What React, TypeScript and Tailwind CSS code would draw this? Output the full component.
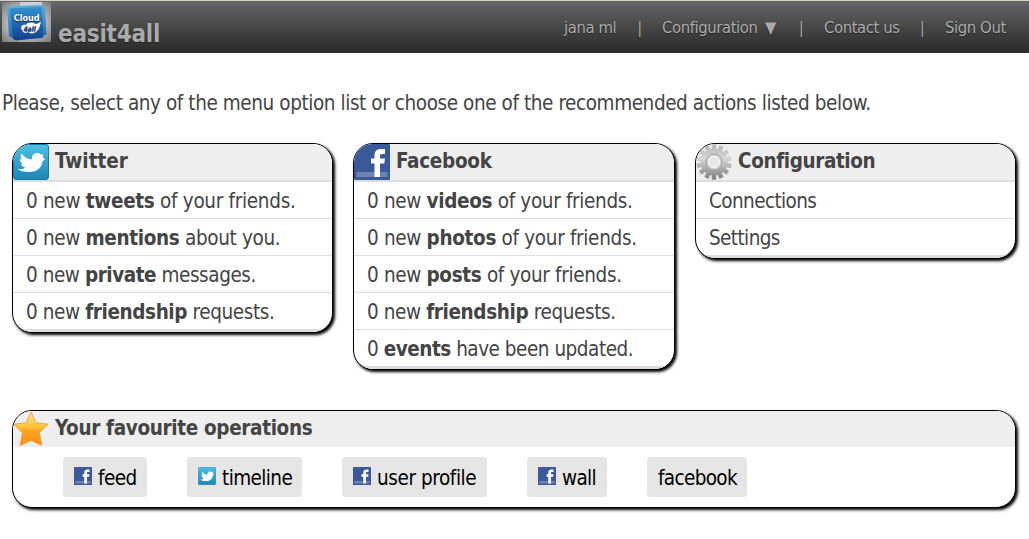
import React from "react";

function TwitterIcon({ className }: { className: string }) {
  return (
    <svg viewBox="0 0 36 36" className={className}>
      <defs>
        <linearGradient id="tw" x1="0" y1="0" x2="0" y2="1">
          <stop offset="0" stopColor="#4cc0e4" />
          <stop offset="1" stopColor="#1b86b4" />
        </linearGradient>
      </defs>
      <rect x="0.5" y="0.5" width="35" height="35" rx="2.5" fill="url(#tw)" stroke="#1679a6" />
      <path
        fill="#fff"
        d="M4.500 24.800C7.500 25.500 10.500 24.800 12.300 23.400C10 23 8.500 21.800 8 20H10C8 18.800 6.800 17.300 6.800 15L9.200 15.600C7.500 13.800 7.200 11.600 8.400 9.500C11.300 13 14.500 15 18.900 15.500C18.500 11.500 20.700 9 24 9C26 9 27 9.500 28.200 10.700L30.600 9.900L29.600 12.300L32 16L29.600 16.800C29 23.500 24.500 28 16 28C11 28 7.500 27 4.500 24.800Z"
      />
    </svg>
  );
}

function FacebookIcon({ className }: { className: string }) {
  return (
    <svg viewBox="0 0 36 36" className={className}>
      <rect width="36" height="36" rx="1" fill="#3b5998" />
      <rect x="2.500" y="28" width="31" height="5" fill="#6d84b4" />
      <path
        fill="#fff"
        d="M20.500 33V19.500H17V14.500H20.500V11.500C20.500 7 23 5 27 5H31V10H28.500C26.500 10 26 10.800 26 12.500V14.500H31L30.300 19.500H26V33Z"
      />
    </svg>
  );
}

function GearIcon() {
  const teeth = Array.from({ length: 14 }, (_, i) => (i * 360) / 14 + 13);
  return (
    <svg viewBox="0 0 36 36" className="size-9 shrink-0">
      <defs>
        <linearGradient id="gear" gradientUnits="userSpaceOnUse" x1="18" y1="0" x2="18" y2="36">
          <stop offset="0" stopColor="#b4b4b4" />
          <stop offset="0.4" stopColor="#d6d6d6" />
          <stop offset="0.6" stopColor="#b8b8b8" />
          <stop offset="1" stopColor="#7d7d7d" />
        </linearGradient>
        <mask id="teeth">
          <circle cx="18" cy="18" r="18" fill="#fff" />
          {teeth.map((a) => (
            <path key={a} d="M16 -1L17.200 4.500H18.800L20 -1Z" fill="#000" transform={`rotate(${a} 18 18)`} />
          ))}
        </mask>
      </defs>
      <circle cx="18" cy="18" r="17.800" fill="url(#gear)" mask="url(#teeth)" />
      <circle cx="18" cy="18" r="8" fill="#d0d0d0" stroke="#a2a2a2" strokeWidth="1" />
      <circle cx="18" cy="18" r="5.400" fill="#e6e6e6" stroke="#fafafa" strokeWidth="1.200" />
    </svg>
  );
}

function StarIcon() {
  return (
    <svg viewBox="0 0 36 36" className="size-9 shrink-0">
      <defs>
        <linearGradient id="star" x1="0" y1="0" x2="0" y2="1">
          <stop offset="0" stopColor="#ffe58a" />
          <stop offset="0.45" stopColor="#ffc23c" />
          <stop offset="0.55" stopColor="#ffa51f" />
          <stop offset="1" stopColor="#fb8a12" />
        </linearGradient>
      </defs>
      <path
        d="M18 1L22.800 11.800L35.300 13.200L26.300 21.500L28.900 34.300L18 29.500L7 34.500L9.500 22L0.700 13.200L13.200 11.800Z"
        fill="url(#star)"
        stroke="#e8a23a"
        strokeWidth="0.900"
        strokeLinejoin="round"
      />
    </svg>
  );
}

function Logo() {
  return (
    <svg viewBox="0 0 49 40" className="h-10 w-[49px] shrink-0">
      <defs>
        <radialGradient id="halo" cx="0.5" cy="0.5" r="0.72">
          <stop offset="0.3" stopColor="#d8d8d8" />
          <stop offset="0.7" stopColor="#a0a0a0" />
          <stop offset="1" stopColor="#747474" />
        </radialGradient>
        <linearGradient id="tile" x1="0" y1="0" x2="0" y2="1">
          <stop offset="0" stopColor="#3592cf" />
          <stop offset="0.5" stopColor="#1f67b2" />
          <stop offset="1" stopColor="#143f8e" />
        </linearGradient>
        <linearGradient id="back" x1="0" y1="0" x2="0" y2="1">
          <stop offset="0" stopColor="#55b0dc" />
          <stop offset="1" stopColor="#2464ae" />
        </linearGradient>
      </defs>
      <rect width="49" height="40" fill="url(#halo)" />
      <rect x="18" width="22" height="4" fill="#cfcfcf" />
      <path d="M5 5.500L36 3.500L40 36L13 38L7 34Z" fill="url(#back)" />
      <path d="M12 4L41 3L43 5L44.500 33L12 37Z" fill="url(#back)" />
      <path d="M8 6.500L39.500 5L41.500 35.500L14 38.500L11 37Z" fill="url(#tile)" />
      <text x="11.700" y="18.700" textLength="26" lengthAdjust="spacingAndGlyphs" fontFamily="DejaVu Sans" fontWeight="700" fontSize="8" fill="#fff">Cloud</text>
      <path d="M20 28C18 25 20 22 24 23C26 20 31 20 33 22C36 22 37 20.500 39 19.500C38 23 37.500 27 35 29C33 32 28 32 26 30C24 32 21 31 20 28Z" fill="#fff" />
      <text x="21.700" y="28.500" textLength="12" lengthAdjust="spacingAndGlyphs" fontFamily="DejaVu Sans" fontWeight="700" fontStyle="italic" fontSize="6.500" fill="#174a97">4all</text>
    </svg>
  );
}

function Card({ icon, title, titleClass = "", className, children }: {
  icon: React.ReactNode; title: string; titleClass?: string; className: string; children: React.ReactNode;
}) {
  return (
    <section className={"overflow-hidden rounded-[20px] border border-black bg-white shadow-[2px_2px_3px_#000] " + className}>
      <h2 className="flex h-9 bg-[#eee] font-bold leading-[34px]">
        {icon}
        <span className={"ml-1.5 whitespace-nowrap " + titleClass}>{title}</span>
      </h2>
      {children}
    </section>
  );
}

function Row({ before, strong, after, spacing }: { before: string; strong?: string; after?: string; spacing: string }) {
  return (
    <li className="h-[37px] border-b border-[#ddd] pl-[13px] leading-[38px] last:h-[39px] last:border-b-[3px]">
      <span className={"block h-9 whitespace-pre " + spacing}>{before}{strong && <b>{strong}</b>}{after}</span>
    </li>
  );
}

function Operation({ icon, label, className }: { icon?: React.ReactNode; label: string; className: string }) {
  return (
    <a className={"flex h-10 items-center gap-[6px] whitespace-nowrap rounded bg-[#e5e5e5] pl-[11px] text-black " + className}>
      {icon && <span className="-mt-0.5">{icon}</span>}
      <span className="pt-0.5">{label}</span>
    </a>
  );
}

export default function App() {
  return (
    <div className="h-[539px] w-[1029px] overflow-hidden bg-white font-['DejaVu_Sans_Condensed','DejaVu_Sans',sans-serif] text-[20.5px] text-[#444]">
      <header className="flex h-[53px] justify-between border-t border-[#d4d0c8] bg-linear-to-b from-[#666] to-[#2a2a2a] pl-0.5 text-[#aaa] [text-shadow:0_1px_1px_#222]">
        <div className="flex h-full pt-px">
          <Logo />
          <span className="ml-[7px] mt-4 text-[24px] font-bold leading-8 tracking-[-0.22px]">easit4all</span>
        </div>
        <nav className="mr-[23px] grid h-[54px] grid-cols-[53px_45px_116px_46px_75px_46px_61px] items-center whitespace-nowrap text-[16.5px] tracking-[-0.4px]">
          <a>jana ml</a>
          <span className="text-center">|</span>
          <a className="flex justify-between pr-0.5"><span>Configuration</span><span>▼</span></a>
          <span className="text-center">|</span>
          <a>Contact us</a>
          <span className="text-center">|</span>
          <a>Sign Out</a>
        </nav>
      </header>
      <main>
        <p className="flex h-[90px] items-start whitespace-nowrap pl-0.5 pt-9 leading-7 tracking-[-0.42px]">
          <span>Please, select any of the menu option list or choose one of the recommended actions listed below.</span>
        </p>
        <div className="flex items-start pl-3">
          <Card icon={<TwitterIcon className="size-9 shrink-0" />} title="Twitter" className="w-[321px]">
            <ul className="border-t-2 border-[#ddd]">
              <Row before="0 new " strong="tweets" after=" of your friends." spacing="tracking-[-0.31px]" />
              <Row before="0 new " strong="mentions" after=" about you." spacing="tracking-[-0.35px]" />
              <Row before="0 new " strong="private" after=" messages." spacing="tracking-[-0.45px]" />
              <Row before="0 new " strong="friendship" after=" requests." spacing="tracking-[-0.4px]" />
            </ul>
          </Card>
          <Card icon={<FacebookIcon className="size-9 shrink-0" />} title="Facebook" titleClass="tracking-[-0.3px]" className="ml-5 w-[322px]">
            <ul className="border-t-2 border-[#ddd]">
              <Row before="0 new " strong="videos" after=" of your friends." spacing="tracking-[-0.34px]" />
              <Row before="0 new " strong="photos" after=" of your friends." spacing="tracking-[-0.33px]" />
              <Row before="0 new " strong="posts" after=" of your friends." spacing="tracking-[-0.35px]" />
              <Row before="0 new " strong="friendship" after=" requests." spacing="tracking-[-0.39px]" />
              <Row before="0 " strong="events" after=" have been updated." spacing="tracking-[-0.48px]" />
            </ul>
          </Card>
          <Card icon={<GearIcon />} title="Configuration" titleClass="tracking-[-0.4px]" className="ml-5 w-[321px]">
            <ul className="border-t-2 border-[#ddd]">
              <Row before="Connections" spacing="tracking-[-0.6px]" />
              <Row before="Settings" spacing="tracking-[-0.6px]" />
            </ul>
          </Card>
        </div>
        <Card icon={<StarIcon />} title="Your favourite operations" titleClass="tracking-[-0.35px]" className="ml-3 mt-10 h-[98px] w-[1004px]">
          <div className="flex gap-10 pl-[50px] pt-2.5">
            <Operation icon={<FacebookIcon className="size-[18px]" />} label="feed" className="w-[84px] tracking-[-0.6px]" />
            <Operation icon={<TwitterIcon className="size-[18px]" />} label="timeline" className="w-[115px] tracking-[-0.6px]" />
            <Operation icon={<FacebookIcon className="size-[18px]" />} label="user profile" className="w-[145px] tracking-[-0.42px]" />
            <Operation icon={<FacebookIcon className="size-[18px]" />} label="wall" className="w-20 tracking-[-0.7px]" />
            <Operation label="facebook" className="w-[100px] tracking-[-0.65px]" />
          </div>
        </Card>
      </main>
    </div>
  );
}
